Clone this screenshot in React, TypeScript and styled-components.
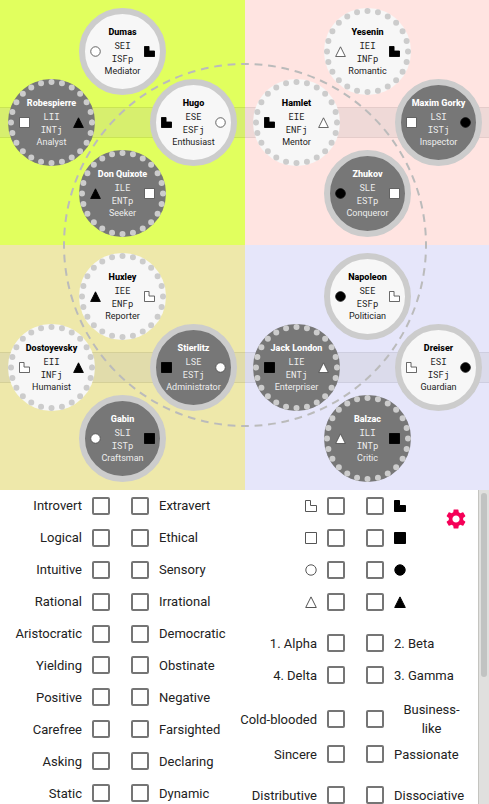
import React from "react";
import styled, { createGlobalStyle, css } from "styled-components";
import { MdSettings } from "react-icons/md";

type Shape = "corner" | "square" | "circle" | "triangle";
type Sign = { shape: Shape; filled: boolean };
type Spot = "top" | "left" | "right" | "bottom";
type Person = {
  name: string;
  code: string;
  mbti: string;
  role: string;
  spot: Spot;
  dark: boolean;
  dotted: boolean;
  first: Sign;
  second: Sign;
};

const GlobalStyle = createGlobalStyle`
  * { box-sizing: border-box; }
  html, body { margin: 0; height: 100%; background: #fff; }
  body { overflow: hidden; font-family: Roboto, "Liberation Sans", sans-serif; color: #222; }
  #root { height: 100%; }
`;

const Page = styled.div`
  display: flex;
  flex-direction: column;
  height: 100vh;
`;

const Socion = styled.main`
  position: relative;
  flex: none;
  display: grid;
  grid-template-columns: 1fr 1fr;
  overflow: hidden;
`;

const Orbit = styled.svg`
  position: absolute;
  top: 50%;
  left: 50%;
  width: 364px;
  height: 364px;
  transform: translate(-50%, -50%);
  fill: none;
  stroke: #bbb;
  stroke-width: 2px;
  stroke-dasharray: 8 6;
  stroke-dashoffset: 4px;
`;

const Quadra = styled.section<{ $color: string }>`
  display: grid;
  grid-template-columns: minmax(8px, 1fr) 71px 16px 55px 16px 71px minmax(8px, 1fr);
  grid-template-rows: 71px 16px 55px 16px 71px;
  padding: 8px 0;
  background: ${(p) => p.$color};
`;

const Band = styled.div`
  grid-area: 2 / 1 / 5 / -1;
  align-self: center;
  height: 31px;
  border: solid rgba(0, 0, 0, 0.1);
  border-width: 1px 0;
  background: rgba(176, 176, 176, 0.2);
  background-clip: padding-box;
`;

const spots: Record<Spot, string> = {
  top: "1 / 3 / 3 / 6",
  left: "2 / 2 / 5 / 4",
  right: "2 / 5 / 5 / 7",
  bottom: "4 / 3 / 6 / 6",
};

const Disc = styled.article<{ $spot: Spot; $dark: boolean; $dotted: boolean }>`
  grid-area: ${(p) => spots[p.$spot]};
  position: relative;
  z-index: 1;
  display: grid;
  grid-template-columns: 11px 1fr 11px;
  align-items: center;
  padding: 0 5px;
  border: 6px solid ${(p) => (p.$dotted ? "transparent" : "#ccc")};
  border-radius: 50%;
  font-size: 9px;
  line-height: 13px;
  white-space: nowrap;
  ${(p) =>
    p.$dark
      ? css`
          background: #777;
          color: #eee;
        `
      : css`
          background: #f7f7f7;
          color: #222;
        `}
`;

const Beads = styled.svg`
  position: absolute;
  inset: -6px;
  width: 87px;
  height: 87px;
  fill: none;
  stroke: #ccc;
  stroke-width: 6px;
  stroke-linecap: round;
  stroke-dasharray: 0 10;
`;

const Caption = styled.div<{ $dark: boolean }>`
  display: flex;
  flex-direction: column;
  align-items: center;
  width: 0;
  justify-self: center;

  h2 {
    margin: 0;
    font-size: 9px;
    line-height: 13px;
    font-weight: 800;
    color: ${(p) => (p.$dark ? "#fff" : "#000")};
  }
`;

const Code = styled.span`
  font-family: "Roboto Mono", "Noto Sans Mono CJK JP", monospace;
`;

const Glyph = styled.svg<{ $size: number }>`
  display: block;
  width: ${(p) => p.$size}px;
  height: ${(p) => p.$size}px;
`;

const Panel = styled.div`
  flex: 1;
  min-height: 0;
  display: flex;
`;

const Traits = styled.form`
  position: relative;
  flex: 1;
  overflow: hidden;
  display: grid;
  grid-template-columns: 1fr 1fr;
  align-items: start;
  padding: 0 5px 0 3px;
`;

const Column = styled.div`
  display: flex;
  flex-direction: column;
  gap: 9px;
`;

const Group = styled.div<{ $even?: boolean }>`
  display: grid;
  grid-auto-rows: ${(p) => (p.$even ? "1fr" : "auto")};
  min-height: ${(p) => (p.$even ? "319px" : "0")};
`;

const PairRow = styled.div<{ $tight?: boolean }>`
  display: grid;
  grid-template-columns: 1fr 1fr;
  align-items: center;
  column-gap: 21px;
  min-height: ${(p) => (p.$tight ? "31px" : "32px")};
`;

const Choice = styled.label<{ $mirrored?: boolean }>`
  display: flex;
  flex-direction: ${(p) => (p.$mirrored ? "row-reverse" : "row")};
  align-items: center;
  gap: 10px;
  font-size: 13px;
  line-height: 19px;
`;

const ChoiceText = styled.span<{ $wrap?: boolean }>`
  text-align: center;
  ${(p) => (p.$wrap ? "max-width: 75px;" : "white-space: nowrap;")}
`;

const Box = styled.input`
  appearance: none;
  flex: none;
  width: 18px;
  height: 18px;
  margin: 0;
  border: 2px solid #757575;
  border-radius: 2px;
  background: #fff;

  &:checked {
    background: #f50057;
    border-color: #f50057;
  }
`;

const Settings = styled.button`
  position: absolute;
  top: 17px;
  right: 10px;
  display: flex;
  padding: 0;
  border: 0;
  background: none;
  color: #f50057;
  font-size: 24px;
`;

const Track = styled.div`
  flex: none;
  width: 11px;
  padding: 3px 2px;
  border-left: 1px solid #c4c4c0;
  background: #e0e0de;
`;

const Thumb = styled.div`
  height: 184px;
  border-radius: 3px;
  background: #c1c3c2;
`;

const paths: Record<Shape, React.ReactNode> = {
  corner: <path d="M.5 .5H5.5V5.5H11.5V11.5H.5Z" />,
  square: <path d="M.5 .5H11.5V11.5H.5Z" />,
  circle: <circle cx="6" cy="6" r="5.2" />,
  triangle: <path d="M6 .9L11.3 11.5H.7Z" />,
};

function Symbol({ sign, size }: { sign: Sign; size: number }) {
  return (
    <Glyph
      $size={size}
      viewBox="0 0 12 12"
      role="img"
      aria-label={`${sign.filled ? "black" : "white"} ${sign.shape}`}
      fill={sign.filled ? "#000" : "#fff"}
      stroke={sign.filled ? "#000" : "#555"}
      strokeWidth="1"
    >
      {paths[sign.shape]}
    </Glyph>
  );
}

const black = (shape: Shape): Sign => ({ shape, filled: true });
const white = (shape: Shape): Sign => ({ shape, filled: false });

const person = (
  spot: Spot,
  look: string,
  name: string,
  code: string,
  mbti: string,
  role: string,
  first: Sign,
  second: Sign
): Person => ({
  spot,
  dark: look.includes("dark"),
  dotted: look.includes("dotted"),
  name,
  code,
  mbti,
  role,
  first,
  second,
});

const quadras: { color: string; people: Person[] }[] = [
  {
    color: "#e1ff5e",
    people: [
      person("top", "light solid", "Dumas", "SEI", "ISFp", "Mediator", white("circle"), black("corner")),
      person("left", "dark dotted", "Robespierre", "LII", "INTj", "Analyst", white("square"), black("triangle")),
      person("right", "light solid", "Hugo", "ESE", "ESFj", "Enthusiast", black("corner"), white("circle")),
      person("bottom", "dark dotted", "Don Quixote", "ILE", "ENTp", "Seeker", black("triangle"), white("square")),
    ],
  },
  {
    color: "#ffe4e1",
    people: [
      person("top", "light dotted", "Yesenin", "IEI", "INFp", "Romantic", white("triangle"), black("corner")),
      person("left", "light dotted", "Hamlet", "EIE", "ENFj", "Mentor", black("corner"), white("triangle")),
      person("right", "dark solid", "Maxim Gorky", "LSI", "ISTj", "Inspector", white("square"), black("circle")),
      person("bottom", "dark solid", "Zhukov", "SLE", "ESTp", "Conqueror", black("circle"), white("square")),
    ],
  },
  {
    color: "#eee8aa",
    people: [
      person("top", "light dotted", "Huxley", "IEE", "ENFp", "Reporter", black("triangle"), white("corner")),
      person("left", "light dotted", "Dostoyevsky", "EII", "INFj", "Humanist", white("corner"), black("triangle")),
      person("right", "dark solid", "Stierlitz", "LSE", "ESTj", "Administrator", black("square"), white("circle")),
      person("bottom", "dark solid", "Gabin", "SLI", "ISTp", "Craftsman", white("circle"), black("square")),
    ],
  },
  {
    color: "#e6e6fa",
    people: [
      person("top", "light solid", "Napoleon", "SEE", "ESFp", "Politician", black("circle"), white("corner")),
      person("left", "dark dotted", "Jack London", "LIE", "ENTj", "Enterpriser", black("square"), white("triangle")),
      person("right", "light solid", "Dreiser", "ESI", "ISFj", "Guardian", white("corner"), black("circle")),
      person("bottom", "dark dotted", "Balzac", "ILI", "INTp", "Critic", white("triangle"), black("square")),
    ],
  },
];

type Pair = [string | Sign, string | Sign];

const dichotomies: Pair[] = [
  ["Introvert", "Extravert"],
  ["Logical", "Ethical"],
  ["Intuitive", "Sensory"],
  ["Rational", "Irrational"],
  ["Aristocratic", "Democratic"],
  ["Yielding", "Obstinate"],
  ["Positive", "Negative"],
  ["Carefree", "Farsighted"],
  ["Asking", "Declaring"],
  ["Static", "Dynamic"],
];

const sideGroups: Pair[][] = [
  [
    [white("corner"), black("corner")],
    [white("square"), black("square")],
    [white("circle"), black("circle")],
    [white("triangle"), black("triangle")],
  ],
  [
    ["1. Alpha", "2. Beta"],
    ["4. Delta", "3. Gamma"],
  ],
  [
    ["Cold-blooded", "Business-like"],
    ["Sincere", "Passionate"],
  ],
  [["Distributive", "Dissociative"]],
];

function Option({ value, mirrored }: { value: string | Sign; mirrored?: boolean }) {
  return (
    <Choice $mirrored={mirrored}>
      <Box type="checkbox" />
      {typeof value === "string" ? (
        <ChoiceText $wrap={!mirrored}>{value}</ChoiceText>
      ) : (
        <Symbol sign={value} size={12} />
      )}
    </Choice>
  );
}

function Pairs({ pairs, even }: { pairs: Pair[]; even?: boolean }) {
  return (
    <Group $even={even}>
      {pairs.map(([a, b], i) => (
        <PairRow key={i} $tight={even}>
          <Option value={a} mirrored />
          <Option value={b} />
        </PairRow>
      ))}
    </Group>
  );
}

export default function App() {
  return (
    <Page>
      <GlobalStyle />
      <Socion>
        {quadras.map((quadra) => (
          <Quadra key={quadra.color} $color={quadra.color}>
            <Band />
            {quadra.people.map((p) => (
              <Disc key={p.name} $spot={p.spot} $dark={p.dark} $dotted={p.dotted}>
                {p.dotted && (
                  <Beads viewBox="0 0 87 87" aria-hidden="true">
                    <circle cx="43.5" cy="43.5" r="40.5" pathLength={240} />
                  </Beads>
                )}
                <Symbol sign={p.first} size={11} />
                <Caption $dark={p.dark}>
                  <h2>{p.name}</h2>
                  <Code>{p.code}</Code>
                  <Code>{p.mbti}</Code>
                  <span>{p.role}</span>
                </Caption>
                <Symbol sign={p.second} size={11} />
              </Disc>
            ))}
          </Quadra>
        ))}
        <Orbit viewBox="0 0 364 364" aria-hidden="true">
          <circle cx="182" cy="182" r="181" pathLength={1176} />
        </Orbit>
      </Socion>
      <Panel>
        <Traits>
          <Column>
            <Pairs pairs={dichotomies} even />
          </Column>
          <Column>
            {sideGroups.map((pairs, i) => (
              <Pairs key={i} pairs={pairs} />
            ))}
          </Column>
          <Settings type="button" aria-label="Settings">
            <MdSettings />
          </Settings>
        </Traits>
        <Track>
          <Thumb />
        </Track>
      </Panel>
    </Page>
  );
}
